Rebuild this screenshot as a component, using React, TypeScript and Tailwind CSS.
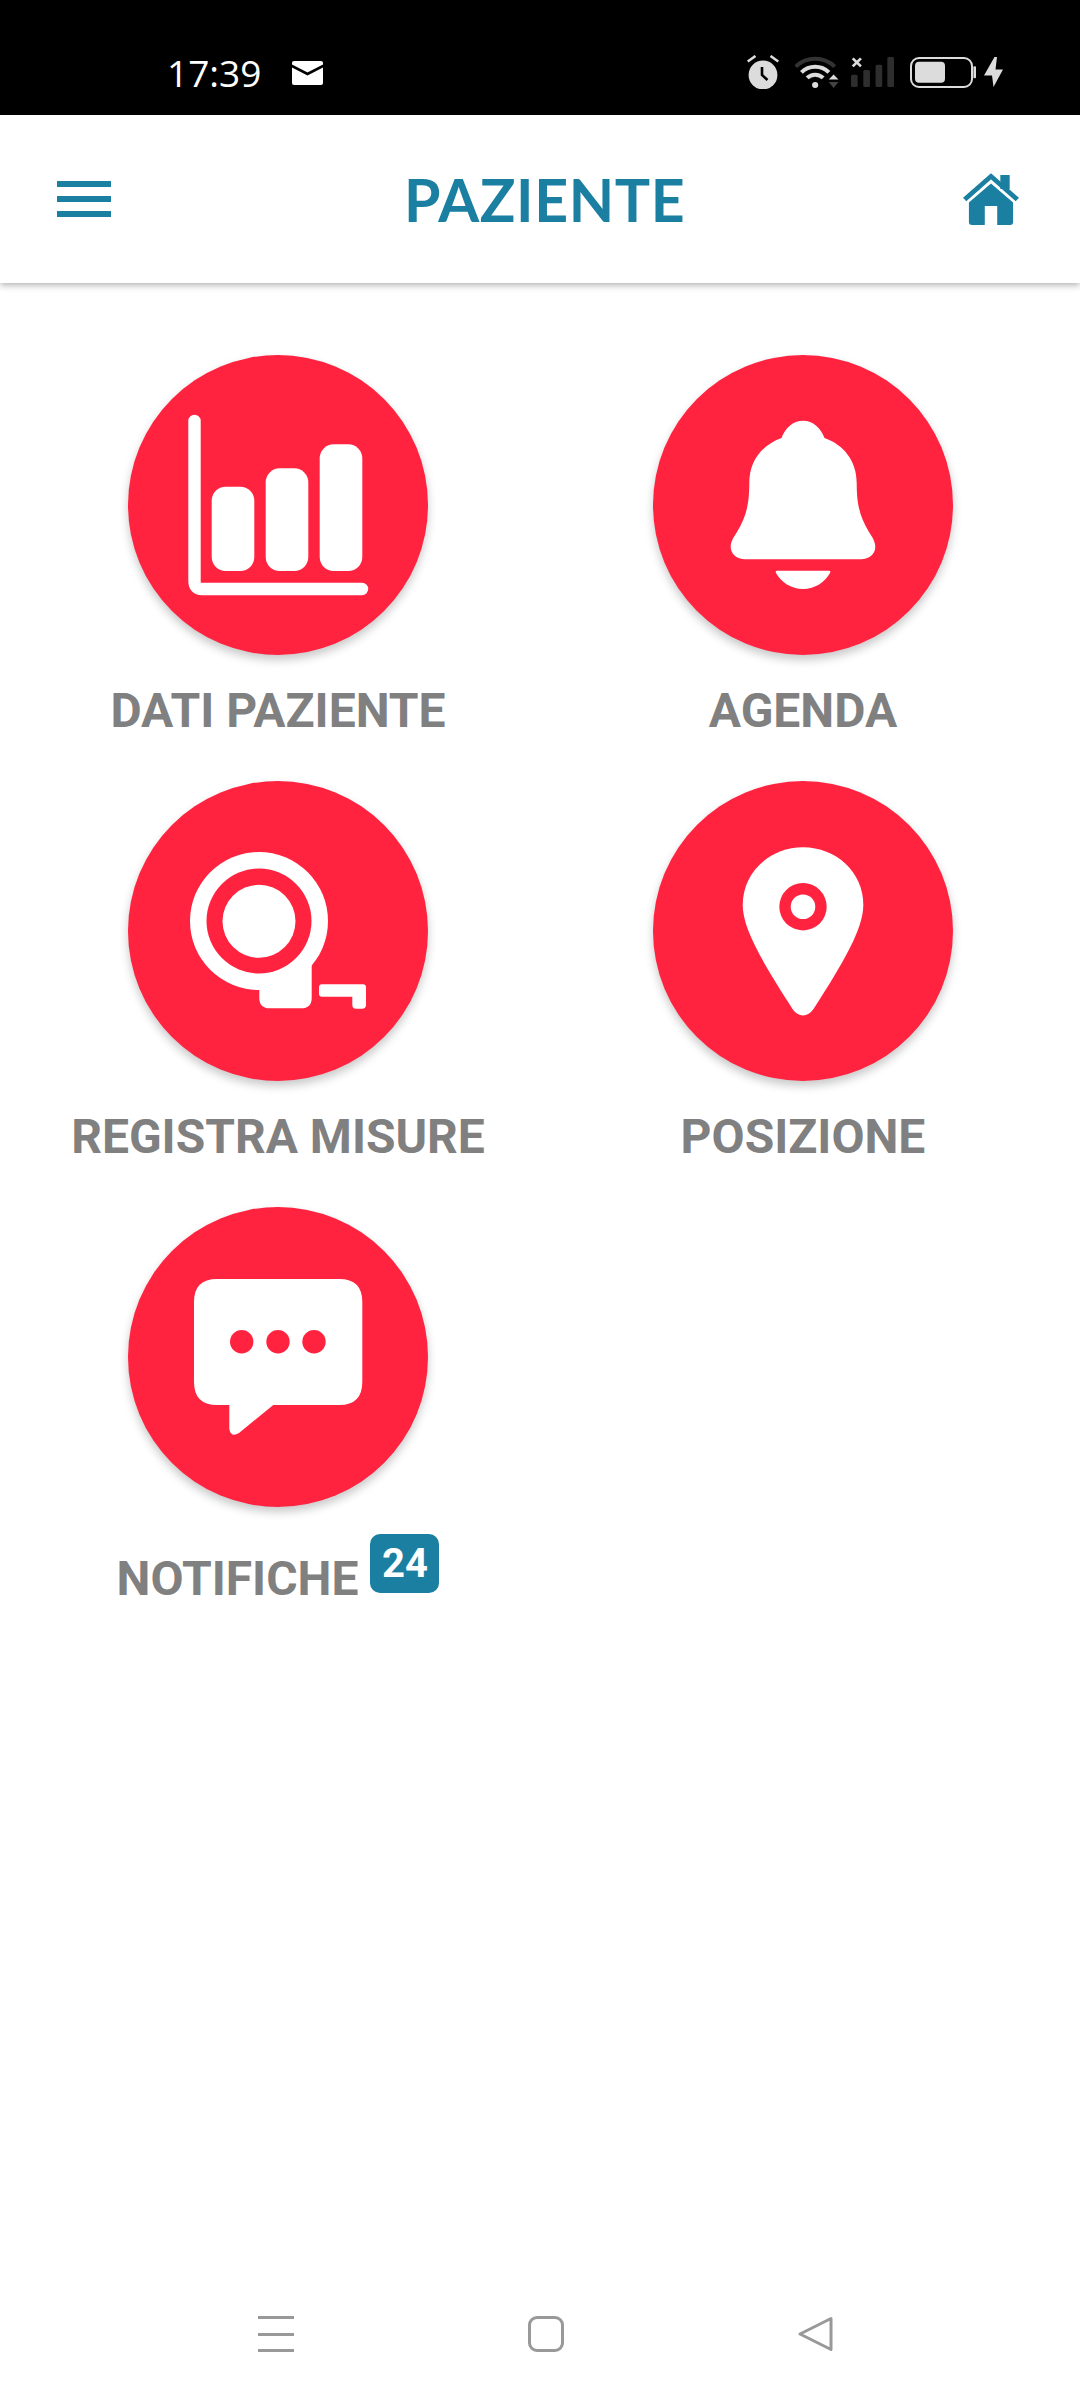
import React from "react";

const TEAL = "#1a7fa1";
const RED = "#ff2340";

function ChartIcon() {
  return (
    <svg width="300" height="300" viewBox="0 0 300 300" fill="white">
      <path d="M66.5 66 V226 Q66.5 234 74 234 H234" fill="none" stroke="white" strokeWidth="12.4" strokeLinecap="round" />
      <rect x="83.7" y="131.7" width="42.6" height="84.3" rx="14" />
      <rect x="137.7" y="113.3" width="42.6" height="102.7" rx="14" />
      <rect x="191.7" y="89.3" width="42.6" height="126.7" rx="14" />
    </svg>
  );
}

function BellIcon() {
  return (
    <svg width="300" height="300" viewBox="0 0 300 300" fill="white">
      <path d="M150 65.7 C160 65.7 168 73 171.5 83 C191 90 203.7 106 203.7 128 C203.7 150 207 162 216 177 C220 183 222.3 187 222.3 192 C222.3 199 216 204.3 208 204.3 H92 C84 204.3 77.7 199 77.7 192 C77.7 187 80 183 84 177 C93 162 96.3 150 96.3 128 C96.3 106 109 90 128.5 83 C132 73 140 65.7 150 65.7 Z" />
      <path d="M124 215.7 H176 Q178 215.7 177 218 C172 227 162 234 150 234 C138 234 128 227 123 218 Q122 215.7 124 215.7 Z" />
    </svg>
  );
}

function TapeIcon() {
  return (
    <svg width="300" height="300" viewBox="0 0 300 300" fill="white">
      <circle cx="131" cy="140" r="69" />
      <path d="M131.3 170 H183.7 V217 Q183.7 227.3 173 227.3 H142 Q131.3 227.3 131.3 217 Z" />
      <circle cx="131" cy="140" r="52.5" fill={RED} />
      <circle cx="131" cy="140.3" r="36.5" />
      <path d="M194 203.3 H235 Q238 203.3 238 206.3 V224 Q238 227.7 234 227.7 H228 Q224.3 227.7 224.3 224 V215.7 H194 Q191 215.7 191 212.7 V206.3 Q191 203.3 194 203.3 Z" />
    </svg>
  );
}

function PinIcon() {
  return (
    <svg width="300" height="300" viewBox="0 0 300 300" fill="white">
      <path d="M150 66.3 C183 66.3 210.3 91 210.3 124 C210.3 148 190 182 160.5 228 C155 236.5 145 236.5 139.5 228 C110 182 89.7 148 89.7 124 C89.7 91 117 66.3 150 66.3 Z" />
      <circle cx="150" cy="125.7" r="23.7" fill={RED} />
      <circle cx="150" cy="125.7" r="12.3" />
    </svg>
  );
}

function BubbleIcon() {
  return (
    <svg width="300" height="300" viewBox="0 0 300 300" fill="white">
      <path d="M89 72 H211.3 Q234.3 72 234.3 95 V175 Q234.3 198 211.3 198 H145.3 L111 226 Q103 231 101.3 222 V198 H89 Q66 198 66 175 V95 Q66 72 89 72 Z" />
      <circle cx="113.7" cy="134.7" r="11.7" fill={RED} />
      <circle cx="150" cy="134.7" r="11.7" fill={RED} />
      <circle cx="186" cy="134.7" r="11.7" fill={RED} />
    </svg>
  );
}

function Tile({ label, children, badge }: { label: string; children: React.ReactNode; badge?: string }) {
  return (
    <div className="flex flex-col items-center">
      <div className="w-[300px] h-[300px] rounded-full bg-[#ff2340] shadow-[0_5px_10px_rgba(0,0,0,0.22)]">{children}</div>
      {badge ? (
        <div className="flex items-start gap-[12px] mt-[27px]">
          <span className="mt-[21px] text-[48px] leading-none font-bold text-[#808080] whitespace-nowrap font-['Roboto',sans-serif]">{label}</span>
          <span className="w-[69px] h-[59px] rounded-[10px] bg-[#1a7fa1] text-white text-[40px] font-bold leading-none flex items-center justify-center font-['Roboto',sans-serif]">{badge}</span>
        </div>
      ) : (
        <span className="mt-[32px] text-[48px] leading-none font-bold text-[#808080] whitespace-nowrap font-['Roboto',sans-serif]">{label}</span>
      )}
    </div>
  );
}

export default function App() {
  return (
    <div className="w-[1080px] h-[2400px] flex flex-col bg-white overflow-hidden">
      <div className="h-[115px] shrink-0 bg-black flex items-center pt-[30px] pl-[167px] pr-[77px]">
        <span className="text-[37px] leading-none text-white font-['Open_Sans',sans-serif]">17:39</span>
        <svg className="ml-[31px]" width="31" height="24" viewBox="0 0 31 24">
          <rect width="31" height="24" rx="2" fill="white" />
          <path d="M-1 4.5 L15.5 13 L32 4.5" fill="none" stroke="black" strokeWidth="2.6" />
        </svg>
        <div className="ml-auto flex items-center mb-[1px]">
          <svg width="32" height="34" viewBox="0 0 32 34">
            <circle cx="16" cy="20" r="14.4" fill="#dcdcdc" />
            <path d="M15 12 V20 L20.5 25" fill="none" stroke="black" strokeWidth="2.6" />
            <path d="M0.7 6.5 L8.5 1 M31.3 6.5 L23.5 1" fill="none" stroke="#dcdcdc" strokeWidth="2.6" />
          </svg>
          <svg className="ml-[16px]" width="44" height="32" viewBox="0 0 43 32" fill="none" preserveAspectRatio="none">
            <path d="M0.6 10.6 A27 27 0 0 1 38.8 10.6" stroke="#333" strokeWidth="4" />
            <path d="M6.3 16.3 A19 19 0 0 1 33.1 16.3" stroke="#dcdcdc" strokeWidth="4" />
            <path d="M11.9 21.9 A11 11 0 0 1 27.5 21.9" stroke="#dcdcdc" strokeWidth="4" />
            <circle cx="19.7" cy="29" r="3" fill="#dcdcdc" />
            <path d="M33 23.5 L37.7 18.5 L42.5 23.5 Z" fill="#dcdcdc" />
            <path d="M33 26 H42.5 L37.7 32 Z" fill="#444" />
          </svg>
          <svg className="ml-[12px]" width="43" height="30" viewBox="0 0 42 30" preserveAspectRatio="none">
            <rect x="0" y="17.7" width="6.5" height="12.3" rx="1.5" fill="#2e2e2e" />
            <rect x="12" y="13" width="6.5" height="17" rx="1.5" fill="#2e2e2e" />
            <rect x="24" y="7.7" width="6.5" height="22.3" rx="1.5" fill="#2e2e2e" />
            <rect x="35.5" y="0" width="6.5" height="30" rx="1.5" fill="#2e2e2e" />
            <path d="M1.7 1.3 L9.7 9.3 M9.7 1.3 L1.7 9.3" stroke="#dcdcdc" strokeWidth="2.6" />
          </svg>
          <svg className="ml-[16px]" width="66" height="31" viewBox="0 0 66 31">
            <rect x="1" y="1" width="61" height="29" rx="8" fill="none" stroke="#dcdcdc" strokeWidth="2" />
            <rect x="5" y="4.7" width="30" height="21" rx="4" fill="#dcdcdc" />
            <rect x="63.4" y="9.3" width="2.6" height="12" rx="1" fill="#dcdcdc" />
          </svg>
          <svg className="ml-[8px]" width="19" height="30" viewBox="0 0 19 30">
            <path d="M10.5 0 L0 18.5 H8 L9.5 30 L19 12.5 H11.5 L13 0 Z" fill="#dcdcdc" />
          </svg>
        </div>
      </div>

      <header className="h-[168px] shrink-0 bg-white flex items-center pl-[57px] pr-[61px] shadow-[0_2px_7px_rgba(0,0,0,0.32)] relative">
        <div className="w-[54px] flex flex-col gap-[9px]">
          <div className="h-[6px] bg-[#1a7fa1]" />
          <div className="h-[6px] bg-[#1a7fa1]" />
          <div className="h-[6px] bg-[#1a7fa1]" />
        </div>
        <h1 className="ml-[293px] text-[59px] leading-none tracking-[0.6px] font-bold text-[#1a7fa1] font-['Lato',sans-serif]">PAZIENTE</h1>
        <svg className="ml-auto" width="56" height="52" viewBox="0 0 54 52" fill={TEAL} preserveAspectRatio="none">
          <path d="M27 10.5 L48.3 29.5 V49 Q48.3 52 45.3 52 H33 V33 H21 V52 H8.7 Q5.7 52 5.7 49 V29.5 Z" />
          <rect x="36" y="2" width="9" height="14" />
          <path d="M1.6 26.5 L27 3.4 L52.4 26.5" fill="none" stroke={TEAL} strokeWidth="4.6" />
        </svg>
      </header>

      <main className="flex-1 min-h-0 grid grid-cols-[524px_524px] gap-x-px auto-rows-[426px] content-start pl-[16px] pt-[72px]">
        <Tile label="DATI PAZIENTE"><ChartIcon /></Tile>
        <Tile label="AGENDA"><BellIcon /></Tile>
        <Tile label="REGISTRA MISURE"><TapeIcon /></Tile>
        <Tile label="POSIZIONE"><PinIcon /></Tile>
        <Tile label="NOTIFICHE" badge="24"><BubbleIcon /></Tile>
      </main>

      <div className="h-[132px] shrink-0 flex items-center gap-[234px] pl-[258px]">
        <div className="w-[36px] flex flex-col gap-[13.5px]">
          <div className="h-[3px] bg-[#999999]" />
          <div className="h-[3px] bg-[#999999]" />
          <div className="h-[3px] bg-[#999999]" />
        </div>
        <div className="w-[36px] h-[36px] rounded-[9px] border-[3px] border-[#999999]" />
        <svg width="35" height="36" viewBox="0 0 35 36">
          <path d="M33 2.5 L2 18 L33 33.5 Z" fill="none" stroke="#999999" strokeWidth="3" strokeLinejoin="round" />
        </svg>
      </div>
    </div>
  );
}
